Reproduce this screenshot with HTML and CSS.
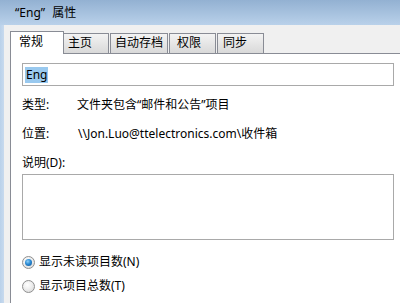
FILE: index.html
```html
<!DOCTYPE html>
<html lang="zh-CN">
<head>
<meta charset="utf-8">
<link rel="stylesheet" href="styles.css">
</head>
<body>
<div class="window">
  <div class="titlebar"><span class="title">“Eng” 属性</span></div>
  <div class="frame">
    <div class="edge"></div>
    <div class="client">
      <div class="tabs">
        <div class="tab active">常规</div>
        <div class="tab tab-home">主页</div>
        <div class="tab tab-archive">自动存档</div>
        <div class="tab tab-perm">权限</div>
        <div class="tab tab-sync">同步</div>
      </div>
      <div class="panel">
        <div class="name-box"><span class="sel">Eng</span></div>
        <div class="row row-type"><span class="label">类型:</span><span class="value">文件夹包含“邮件和公告”项目</span></div>
        <div class="row row-loc"><span class="label">位置:</span><span class="value loc">\\Jon.Luo@ttelectronics.com\收件箱</span></div>
        <div class="desc-label">说明(D):</div>
        <div class="textarea"></div>
        <div class="radio radio-first"><span class="dot checked"></span><span>显示未读项目数(N)</span></div>
        <div class="radio radio-second"><span class="dot"></span><span>显示项目总数(T)</span></div>
      </div>
    </div>
  </div>
</div>
</body>
</html>
```
FILE: styles.css
```css
* { box-sizing: border-box; }
html, body { margin: 0; padding: 0; }
body {
  font-family: "Noto Sans", "Noto Sans CJK SC", sans-serif;
  font-size: 12px;
  color: #000;
  background: #f0f0f0;
}
.window {
  width: 400px;
  height: 303px;
  overflow: hidden;
  display: flex;
  flex-direction: column;
  background: #f0f0f0;
}
.titlebar {
  height: 25px;
  flex: none;
  display: flex;
  align-items: center;
  padding-left: 15px;
  padding-top: 1px;
  background: linear-gradient(#93b1d2, #b9d1ea);
}
.title { line-height: 16px; word-spacing: 4px; }
.frame {
  flex: 1;
  display: flex;
  min-height: 0;
}
.edge {
  width: 4px;
  flex: none;
  background: linear-gradient(to right, #b9d1ea, #c8daee);
}
.client {
  flex: 1;
  display: flex;
  flex-direction: column;
  padding: 6px 0 0 6px;
  min-width: 0;
}
.tabs {
  height: 22px;
  flex: none;
  display: flex;
  align-items: flex-end;
  position: relative;
  z-index: 1;
}
.tab {
  height: 20px;
  border: 1px solid #898c95;
  border-bottom: none;
  background: linear-gradient(#f3f3f3, #d9d9d9);
  line-height: 18px;
  padding-left: 4px;
  margin-left: 1px;
  white-space: nowrap;
}
.tab.active {
  height: 23px;
  width: 54px;
  margin-left: 0;
  margin-bottom: -1px;
  background: #fff;
  padding-left: 8px;
  line-height: 20px;
  position: relative;
  z-index: 2;
}
.tab-home { width: 46px; margin-left: -1px; }
.tab-archive { width: 58px; }
.tab-perm { width: 47px; padding-left: 7px; }
.tab-sync { width: 47px; padding-left: 5px; }
.panel {
  flex: 1;
  background: #fff;
  border-top: 1px solid #898c95;
  border-left: 1px solid #898c95;
  padding: 9px 0 0 11px;
}
.name-box {
  width: 372px;
  height: 23px;
  border: 1px solid #a9a9a9;
  padding: 2px 0 0 2px;
}
.sel {
  display: inline-block;
  height: 16px;
  line-height: 16px;
  background: #99c9ef;
  padding: 0 1px;
}
.row {
  display: flex;
  height: 16px;
  line-height: 16px;
}
.row-type { margin-top: 11px; }
.row-loc { margin-top: 13px; }
.label { width: 55px; flex: none; }
.loc { padding-left: 1px; }
.desc-label {
  margin-top: 13px;
  height: 16px;
  line-height: 16px;
}
.textarea {
  margin-top: 3px;
  width: 372px;
  height: 66px;
  border: 1px solid #a9a9a9;
}
.radio {
  display: flex;
  align-items: center;
  height: 16px;
  line-height: 16px;
  gap: 4px;
}
.radio-first { margin-top: 14px; }
.radio-second { margin-top: 8px; }
.dot {
  width: 13px;
  height: 13px;
  border-radius: 50%;
  border: 1px solid #8f8f8f;
  background: radial-gradient(circle at 40% 35%, #ffffff 0%, #f0f0f0 40%, #d4d4d4 100%);
  display: flex;
  align-items: center;
  justify-content: center;
}
.dot.checked::after {
  content: "";
  width: 7px;
  height: 7px;
  border-radius: 50%;
  background: radial-gradient(circle at 40% 35%, #8fd0f8 0%, #2a8ad4 45%, #0d4f8f 100%);
}
```
